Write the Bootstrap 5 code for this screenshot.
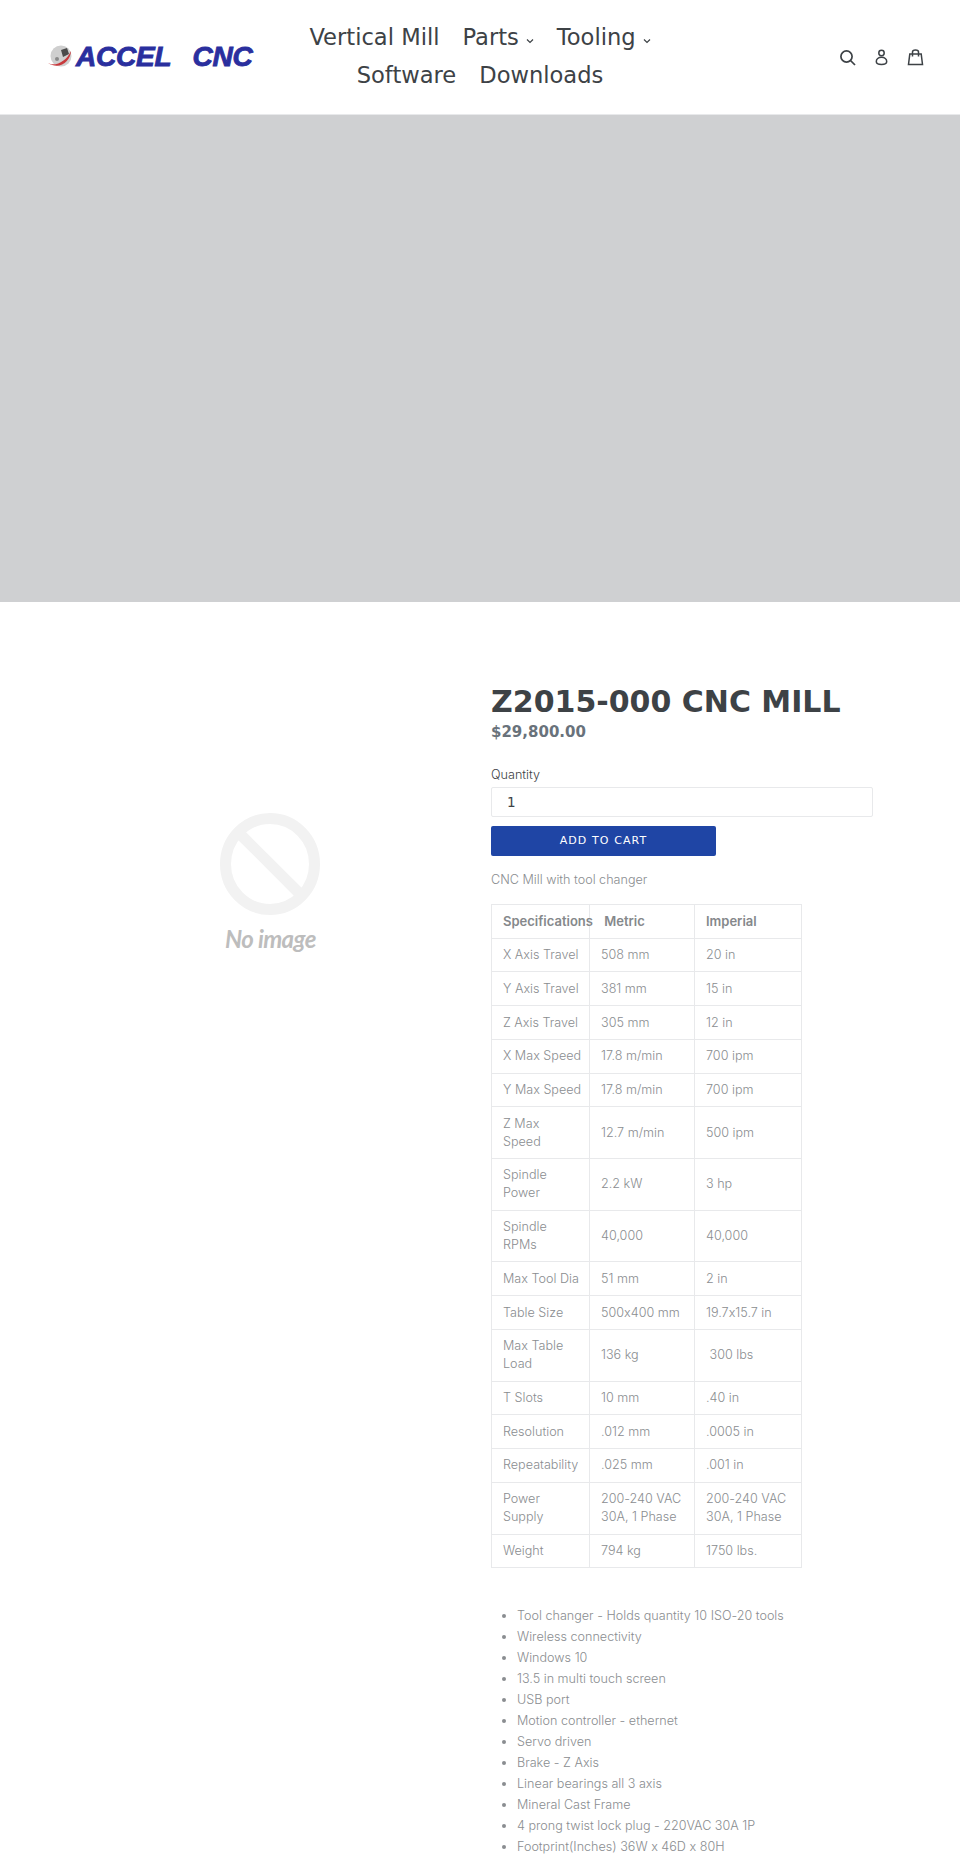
<!DOCTYPE html>
<html lang="en">
<head>
  <meta charset="UTF-8">
  <title>Z2015-000 CNC MILL</title>
  <meta name="viewport" content="width=device-width, initial-scale=1">
  <link href="https://cdn.jsdelivr.net/npm/bootstrap@5.3.0/dist/css/bootstrap.min.css" rel="stylesheet">
  <style>
    body { font-family: "Inter", "Liberation Sans", sans-serif; font-weight: 300; font-size: 12.6px; font-feature-settings: "calt" 0; color: #8a8d90; background: #fff; }
    .site-head { height: 115px; padding: 0 36px; border-bottom: 1px solid #e8e9eb; }
    .logo-box { flex: 1 1 0; }
    .logo-mark { margin-left: 12px; flex: none; }
    .logo-word { font-family: "Liberation Sans", sans-serif; font-weight: 700; font-style: italic; font-size: 28px; line-height: 1; color: #2a2f9e; letter-spacing: -.2px; -webkit-text-stroke: .9px #2a2f9e; }
    .main-links { flex: none; font-family: "DejaVu Sans", sans-serif; font-size: 22.6px; font-weight: 400; line-height: 38px; margin-top: -2px; }
    .main-links a { color: #3d4246; text-decoration: none; margin: 0 7.9px; white-space: nowrap; }
    .main-links svg { margin-left: 7px; vertical-align: 1px; }
    .head-icons { flex: 1 1 0; gap: 17px; }
    .hero-band { height: 487px; background: #cfd0d2; }
    .product-area { padding: 82px 0 0 491px; position: relative; }
    .no-image { position: absolute; left: 220px; top: 211px; }
    .no-image-text { font-family: "Lato", sans-serif; font-style: italic; font-weight: 700; font-size: 24px; color: #bdbdbd; letter-spacing: -.6px; line-height: 1; margin-top: 12px; margin-left: 5px; }
    .info-col { width: 382px; }
    .prod-title { font-family: "DejaVu Sans", sans-serif; font-weight: 700; font-size: 30px; line-height: 36px; color: #3d4246; margin: 0; white-space: nowrap; }
    .prod-price { font-family: "DejaVu Sans", sans-serif; font-weight: 700; font-size: 15px; line-height: 24px; color: #69727b; margin-bottom: 21px; }
    .qty-label { color: #3d4246; display: block; line-height: 20px; margin-bottom: 2px; }
    .qty-input { display: block; width: 382px; height: 30px; border: 1px solid #e8e9eb; border-radius: 2px; padding: 0 15px; font-family: "DejaVu Sans", sans-serif; font-size: 13.5px; color: #3d4246; margin-bottom: 9px; }
    .cart-btn { display: block; width: 225px; height: 30px; background: #1f45a5; color: #fff; border: 0; border-radius: 2px; font-family: "DejaVu Sans", sans-serif; font-size: 11px; font-weight: 400; letter-spacing: 1.1px; margin-bottom: 14px; }
    .blurb { line-height: 20px; margin-bottom: 14px; }
    .spec-table { border-collapse: collapse; width: 310px; table-layout: fixed; margin-bottom: 36.5px; }
    .spec-table td, .spec-table th { border: 1px solid #e8e9eb; padding: 7.36px 0 7.36px 11px; line-height: 18px; vertical-align: middle; font-weight: 300; white-space: nowrap; }
    .spec-table th { font-weight: 600; font-size: 13px; color: #85888b; }
    .feature-list { padding-left: 26px; margin: 0; line-height: 21px; }
  </style>
</head>
<body>
  <!-- Header -->
  <header class="site-head d-flex align-items-center">
    <div class="logo-box d-flex align-items-center">
      <svg width="24" height="24" viewBox="0 0 24 24" class="logo-mark">
        <circle cx="13" cy="11" r="10.5" fill="#cfcfcf"/>
        <path d="M13 5l6-2 2 6-6 3z" fill="#4a4a4a"/>
        <circle cx="9" cy="14" r="2" fill="#8a8a8a"/>
        <path d="M0 18C7 22 18 17 23 6c0 9-11 20-23 12z" fill="#c8393c"/>
      </svg>
      <span class="logo-word ms-1">ACCEL</span>
      <span class="logo-word" style="margin-left:21px">CNC</span>
    </div>
    <nav class="main-links text-center">
      <a href="#">Vertical Mill</a>
      <a href="#">Parts<svg width="8" height="6" viewBox="0 0 8 6"><path d="M1 1.5 4 4.5 7 1.5" fill="none" stroke="#3d4246" stroke-width="1.2"/></svg></a>
      <a href="#">Tooling<svg width="8" height="6" viewBox="0 0 8 6"><path d="M1 1.5 4 4.5 7 1.5" fill="none" stroke="#3d4246" stroke-width="1.2"/></svg></a>
      <br>
      <a href="#">Software</a>
      <a href="#">Downloads</a>
    </nav>
    <div class="head-icons d-flex align-items-center justify-content-end">
      <svg width="17" height="17" viewBox="0 0 17 17" fill="none" stroke="#3d4246" stroke-width="1.7"><circle cx="7.5" cy="7.5" r="5.6"/><path d="M11.5 11.5 16 16"/></svg>
      <svg width="17" height="17" viewBox="0 0 17 17" fill="none" stroke="#3d4246" stroke-width="1.5"><circle cx="8.5" cy="4" r="2.7"/><path d="M8.5 8.3c-3.2 0-5.2 2-5.2 4.3 0 2 2 3 5.2 3s5.2-1 5.2-3c0-2.3-2-4.3-5.2-4.3z"/></svg>
      <svg width="17" height="17" viewBox="0 0 17 17" fill="none" stroke="#3d4246" stroke-width="1.5"><path d="M2.8 5h11.4l1.3 10.5h-14z"/><path d="M5.5 7.5V3c0-1.3 1-2 3-2s3 .7 3 2v4.5"/></svg>
    </div>
  </header>

  <div class="hero-band"></div>

  <!-- Product -->
  <main class="product-area">
    <div class="no-image">
      <svg width="100" height="102" viewBox="0 0 100 102"><ellipse cx="50" cy="51" rx="44.5" ry="45.5" fill="none" stroke="#f2f2f2" stroke-width="11"/><path d="M18 19 82 83" stroke="#f2f2f2" stroke-width="11"/></svg>
      <div class="no-image-text">No image</div>
    </div>
    <div class="info-col">
      <h1 class="prod-title">Z2015-000 CNC MILL</h1>
      <div class="prod-price">$29,800.00</div>
      <label class="qty-label">Quantity</label>
      <input class="qty-input" value="1">
      <button class="cart-btn">ADD TO CART</button>
      <p class="blurb">CNC Mill with tool changer</p>
      <table class="spec-table">
        <colgroup><col style="width:98px"><col style="width:105px"><col style="width:107px"></colgroup>
        <tr><th>Specifications</th><th>&nbsp;Metric</th><th>Imperial</th></tr>
        <tr><td>X Axis Travel</td><td>508 mm</td><td>20 in</td></tr>
        <tr><td>Y Axis Travel</td><td>381 mm</td><td>15 in</td></tr>
        <tr><td>Z Axis Travel</td><td>305 mm</td><td>12 in</td></tr>
        <tr><td>X Max Speed</td><td>17.8 m/min</td><td>700 ipm</td></tr>
        <tr><td>Y Max Speed</td><td>17.8 m/min</td><td>700 ipm</td></tr>
        <tr><td>Z Max<br>Speed</td><td>12.7 m/min</td><td>500 ipm</td></tr>
        <tr><td>Spindle<br>Power</td><td>2.2 kW</td><td>3 hp</td></tr>
        <tr><td>Spindle<br>RPMs</td><td>40,000</td><td>40,000</td></tr>
        <tr><td>Max Tool Dia</td><td>51 mm</td><td>2 in</td></tr>
        <tr><td>Table Size</td><td>500x400 mm</td><td>19.7x15.7 in</td></tr>
        <tr><td>Max Table<br>Load</td><td>136 kg</td><td>&nbsp;300 lbs</td></tr>
        <tr><td>T Slots</td><td>10 mm</td><td>.40 in</td></tr>
        <tr><td>Resolution</td><td>.012 mm</td><td>.0005 in</td></tr>
        <tr><td>Repeatability</td><td>.025 mm</td><td>.001 in</td></tr>
        <tr><td>Power<br>Supply</td><td>200-240 VAC<br>30A, 1 Phase</td><td>200-240 VAC<br>30A, 1 Phase</td></tr>
        <tr><td>Weight</td><td>794 kg</td><td>1750 lbs.</td></tr>
      </table>
      <ul class="feature-list">
        <li>Tool changer - Holds quantity 10 ISO-20 tools</li>
        <li>Wireless connectivity</li>
        <li>Windows 10</li>
        <li>13.5 in multi touch screen</li>
        <li>USB port</li>
        <li>Motion controller - ethernet</li>
        <li>Servo driven</li>
        <li>Brake - Z Axis</li>
        <li>Linear bearings all 3 axis</li>
        <li>Mineral Cast Frame</li>
        <li>4 prong twist lock plug - 220VAC 30A 1P</li>
        <li>Footprint(Inches) 36W x 46D x 80H</li>
      </ul>
    </div>
  </main>
  <script src="https://cdn.jsdelivr.net/npm/bootstrap@5.3.0/dist/js/bootstrap.bundle.min.js"></script>
</body>
</html>
